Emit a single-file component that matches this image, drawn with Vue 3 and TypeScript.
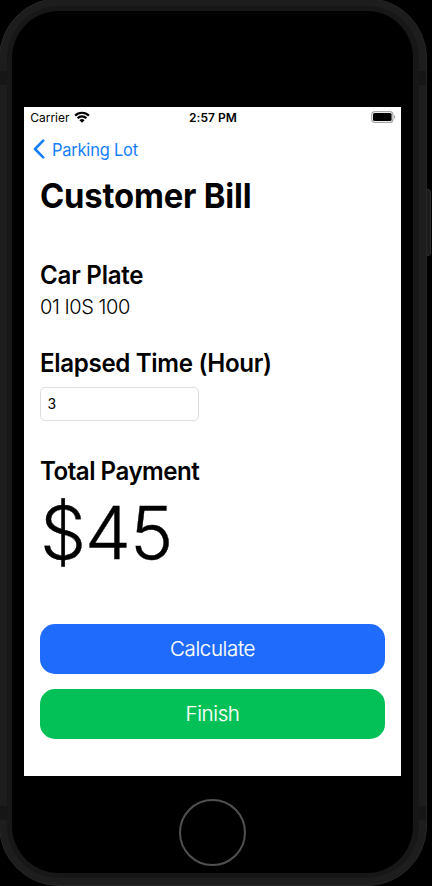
<script setup lang="ts">
import { ref } from 'vue'

const plate = ref<string>('01 I0S 100')
const hours = ref<string>('3')
const total = ref<number>(45)
const hourlyRate = 15

function calculate(): void {
  total.value = Number(hours.value) * hourlyRate
}

function finish(): void {
  hours.value = ''
  total.value = 0
}
</script>

<template>
  <div class="stage">
    <span class="side-button"></span>
    <div class="phone">
      <span class="band band-top"></span>
      <span class="band band-bottom"></span>
      <div class="bezel">
        <main class="screen">
          <header class="status">
            <div class="carrier">
              <span class="carrier-name">Carrier</span>
              <svg class="wifi" viewBox="0 0 16 12" width="16" height="12">
                <path d="M1.1 4.6a9.8 9.8 0 0 1 13.8 0M3.6 7.2a6.2 6.2 0 0 1 8.8 0" fill="none" stroke="#000" stroke-width="2.2" />
                <path d="M8 11.7 5.4 9.2a3.7 3.7 0 0 1 5.2 0z" fill="#000" />
              </svg>
            </div>
            <span class="time">2:57 PM</span>
            <svg class="battery" viewBox="0 0 25 12" width="25" height="12">
              <rect x=".7" y=".6" width="21.2" height="10.8" rx="3" fill="none" stroke="#a8a8a8" stroke-width="1.2" />
              <rect x="2" y="2" width="18.6" height="8" rx="1.5" fill="#000" />
              <path d="M23 4.1c1.7.7 1.7 3.1 0 3.8z" fill="#a8a8a8" />
            </svg>
          </header>
          <nav class="nav">
            <svg class="chevron" viewBox="0 0 12 20" width="12" height="20">
              <path d="M10.2 1.7 2 10l8.2 8.3" fill="none" stroke="#167efb" stroke-width="2.6" stroke-linecap="round" stroke-linejoin="round" />
            </svg>
            <span class="back">Parking Lot</span>
          </nav>
          <h1 class="title">Customer Bill</h1>
          <section class="plate-group">
            <h2 class="car">Car Plate</h2>
            <p class="plate">{{ plate }}</p>
          </section>
          <section class="time-group">
            <h2 class="elapsed">Elapsed Time (Hour)</h2>
            <input v-model="hours" class="hours" type="text" />
          </section>
          <section class="pay-group">
            <h2 class="payment">Total Payment</h2>
            <p class="amount">${{ total }}</p>
          </section>
          <div class="actions">
            <button class="action calculate" @click="calculate"><span>Calculate</span></button>
            <button class="action finish" @click="finish"><span>Finish</span></button>
          </div>
        </main>
        <span class="home"></span>
      </div>
    </div>
  </div>
</template>

<style>
body {
  background: #000;
}
</style>

<style scoped>
.stage {
  position: relative;
  box-sizing: border-box;
  width: 432px;
  height: 886px;
  overflow: hidden;
  background: #000;
  font-family: Inter, "Liberation Sans", sans-serif;
  color: #000;
}
.side-button {
  position: absolute;
  left: 424px;
  top: 189px;
  width: 7px;
  height: 67px;
  box-sizing: border-box;
  border: 1px solid #2b2b2b;
  border-radius: 3px;
  background: #1c1c1c;
}
.phone {
  position: relative;
  box-sizing: border-box;
  width: 428px;
  height: 888px;
  margin: -2px 0 0 -1px;
  padding: 7px;
  border: 1px solid #262626;
  border-radius: 60px;
  background: #1d1d1d;
}
.band {
  position: absolute;
  left: 0;
  width: 426px;
  height: 14px;
  background: #161616;
}
.band-top {
  top: 72px;
}
.band-bottom {
  top: 807px;
}
.bezel {
  position: relative;
  box-sizing: border-box;
  height: 100%;
  border: 5px solid #171717;
  border-width: 5px 6px 5px 5px;
  border-radius: 52px;
  background: #000;
  display: flex;
  flex-direction: column;
  align-items: center;
}
.screen {
  box-sizing: border-box;
  width: 377px;
  height: 669px;
  flex: none;
  margin-top: 96px;
  padding: 0 16px;
  background: #fff;
  overflow: hidden;
}
.home {
  box-sizing: border-box;
  width: 67px;
  height: 67px;
  flex: none;
  margin-top: 23px;
  border: 2px solid #505050;
  border-radius: 50%;
}
h1,
h2,
p {
  margin: 0;
  white-space: nowrap;
}
h1,
h2,
.back {
  transform: scaleX(0.965);
  transform-origin: left center;
}
.status {
  display: grid;
  grid-template-columns: 1fr auto 1fr;
  align-items: center;
  height: 20px;
  margin: 0 -11px 0 -10px;
  font-size: 12px;
}
.carrier {
  display: flex;
  align-items: center;
  gap: 4px;
  padding-left: 0.2px;
}
.time {
  font-weight: 600;
  letter-spacing: 0.05px;
}
.battery {
  justify-self: end;
}
.nav {
  display: flex;
  align-items: center;
  gap: 7.5px;
  height: 44px;
  margin-left: -7.5px;
  color: #167efb;
  font-size: 17px;
  letter-spacing: -0.2px;
}
.back {
  padding-top: 1px;
}
.title {
  height: 50px;
  line-height: 50px;
  font-size: 34px;
  font-weight: 700;
  letter-spacing: -0.2px;
}
h2 {
  height: 32px;
  line-height: 32px;
  font-size: 25px;
  font-weight: 600;
  letter-spacing: -0.35px;
}
.plate-group {
  margin-top: 38px;
}
.car {
  letter-spacing: -0.25px;
}
.payment {
  letter-spacing: -0.52px;
}
.plate {
  height: 32px;
  line-height: 32px;
  font-size: 20px;
  font-weight: 300;
  letter-spacing: -0.45px;
}
.time-group {
  margin-top: 24px;
}
.hours {
  display: block;
  box-sizing: border-box;
  width: 159px;
  height: 34px;
  margin-top: 8px;
  padding: 0 6.5px 1px;
  border: 1px solid #dedede;
  border-radius: 5px;
  outline: none;
  background: #fff;
  color: #000;
  font: 400 14px Inter, "Liberation Sans", sans-serif;
}
.pay-group {
  margin-top: 34px;
}
.amount {
  height: 92px;
  line-height: 92px;
  font-size: 73px;
  font-weight: 300;
  letter-spacing: -1px;
  -webkit-text-stroke: 0.4px #000;
}
.actions {
  display: grid;
  gap: 15px;
  margin-top: 45px;
}
.action {
  height: 50px;
  padding: 0 0 1px;
  border: 0;
  border-radius: 15px;
  color: #fff;
  font: 300 20.5px Inter, "Liberation Sans", sans-serif;
  letter-spacing: -0.38px;
  -webkit-text-stroke: 0.15px #fff;
}
.calculate {
  background: #1f6bfb;
}
.finish {
  background: #03c157;
}
</style>
